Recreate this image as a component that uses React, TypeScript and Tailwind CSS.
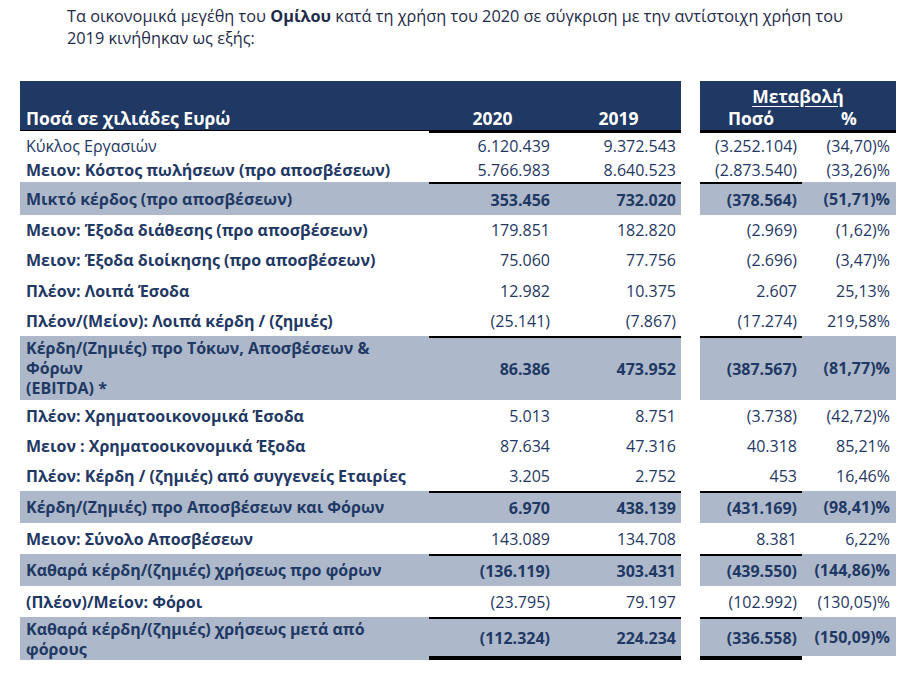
import React from "react";

type Row = {
  label: React.ReactNode;
  v: [string, string, string, string];
  h: number;
  total?: boolean;
  bold?: boolean;
  last?: boolean;
};

const rows: Row[] = [
  { label: "Κύκλος Εργασιών", v: ["6.120.439", "9.372.543", "(3.252.104)", "(34,70)%"], h: 25, bold: false },
  { label: "Μειον: Κόστος πωλήσεων (προ αποσβέσεων)", v: ["5.766.983", "8.640.523", "(2.873.540)", "(33,26)%"], h: 24 },
  { label: "Μικτό κέρδος (προ αποσβέσεων)", v: ["353.456", "732.020", "(378.564)", "(51,71)%"], h: 33, total: true },
  { label: "Μειον: Έξοδα διάθεσης (προ αποσβέσεων)", v: ["179.851", "182.820", "(2.969)", "(1,62)%"], h: 30 },
  { label: "Μειον: Έξοδα διοίκησης (προ αποσβέσεων)", v: ["75.060", "77.756", "(2.696)", "(3,47)%"], h: 30 },
  { label: "Πλέον: Λοιπά Έσοδα", v: ["12.982", "10.375", "2.607", "25,13%"], h: 31 },
  { label: "Πλέον/(Μείον): Λοιπά κέρδη / (ζημιές)", v: ["(25.141)", "(7.867)", "(17.274)", "219,58%"], h: 30 },
  {
    label: (
      <>
        Κέρδη/(Ζημιές) προ Τόκων, Αποσβέσεων &amp;
        <br />
        Φόρων
        <br />
        (EBITDA) *
      </>
    ),
    v: ["86.386", "473.952", "(387.567)", "(81,77)%"],
    h: 64,
    total: true,
  },
  { label: "Πλέον: Χρηματοοικονομικά Έσοδα", v: ["5.013", "8.751", "(3.738)", "(42,72)%"], h: 31 },
  { label: "Μειον : Χρηματοοικονομικά Έξοδα", v: ["87.634", "47.316", "40.318", "85,21%"], h: 30 },
  { label: "Πλέον: Κέρδη / (ζημιές) από συγγενείς Εταιρίες", v: ["3.205", "2.752", "453", "16,46%"], h: 30 },
  { label: "Κέρδη/(Ζημιές) προ Αποσβέσεων και Φόρων", v: ["6.970", "438.139", "(431.169)", "(98,41)%"], h: 32, total: true },
  { label: "Μειον: Σύνολο Αποσβέσεων", v: ["143.089", "134.708", "8.381", "6,22%"], h: 31 },
  { label: "Καθαρά κέρδη/(ζημιές) χρήσεως προ φόρων", v: ["(136.119)", "303.431", "(439.550)", "(144,86)%"], h: 32, total: true },
  { label: "(Πλέον)/Μείον: Φόροι", v: ["(23.795)", "79.197", "(102.992)", "(130,05)%"], h: 31 },
  {
    label: (
      <>
        Καθαρά κέρδη/(ζημιές) χρήσεως μετά από
        <br />
        φόρους
      </>
    ),
    v: ["(112.324)", "224.234", "(336.558)", "(150,09)%"],
    h: 43,
    total: true,
    last: true,
  },
];

function DataRow({ r }: { r: Row }) {
  const bg = r.total ? "bg-[#adb9ca]" : "bg-white";
  const numW = r.total ? "font-bold" : "font-normal";
  const top = r.total ? "border-t-2 border-t-black" : "";
  const bottom = r.last ? "border-b-4 border-b-black" : "";
  const labelW = r.bold === false ? "font-normal" : "font-bold";
  return (
    <>
      <div
        className={`${bg} ${labelW} leading-[20px] flex items-center pl-[6px] whitespace-nowrap`}
        style={{ height: r.h }}
      >
        <div>{r.label}</div>
      </div>
      <div className={`${bg} ${numW} ${top} ${bottom} flex items-center justify-end pr-[6px]`}>{r.v[0]}</div>
      <div className={`${bg} ${numW} ${top} ${bottom} flex items-center justify-end pr-[5px]`}>{r.v[1]}</div>
      <div className="bg-white" />
      <div className={`${bg} ${numW} ${top} ${bottom} flex items-center justify-end pr-[5px]`}>{r.v[2]}</div>
      <div className={`${bg} ${numW} flex items-center justify-end pr-[6px] ${r.last ? "mb-[4px]" : ""}`}>{r.v[3]}</div>
    </>
  );
}

export default function App() {
  return (
    <div className="w-[908px] h-[682px] bg-white font-['Open_Sans',sans-serif] text-[#1f3864] overflow-hidden">
      <p className="pl-[67px] pt-[5px] text-[16.3px] leading-[22px] text-[#1f2b4a] whitespace-nowrap">
        Τα οικονομικά μεγέθη του <span className="font-bold">Ομίλου</span> κατά τη χρήση του 2020 σε σύγκριση με την αντίστοιχη χρήση του
        <br />
        2019 κινήθηκαν ως εξής:
      </p>
      <div className="mt-[32px] ml-[20px] grid grid-cols-[409px_127px_125px_19px_102px_94px] text-[16px] leading-[20px]">
        {/* header */}
        <div className="self-start h-[50px] bg-[#1f3864] border-b border-b-black flex items-end pl-[6px] pb-[1px] text-white font-bold text-[17.5px] leading-[22px]">
          Ποσά σε χιλιάδες Ευρώ
        </div>
        <div className="h-[52px] bg-[#1f3864] border-b-[3px] border-b-black flex items-end justify-center pb-[1px] text-white font-bold text-[17.5px] leading-[22px]">
          2020
        </div>
        <div className="h-[52px] bg-[#1f3864] border-b-[3px] border-b-black flex items-end justify-center pb-[1px] text-white font-bold text-[17.5px] leading-[22px]">
          2019
        </div>
        <div className="bg-white" />
        <div className="col-span-2 h-[52px] bg-[#1f3864] border-b-[3px] border-b-black flex flex-col justify-end pb-[1px] text-white font-bold text-[17.5px] leading-[22px]">
          <div className="text-center">
            <span className="underline underline-offset-[3px]">Μεταβολή</span>
          </div>
          <div className="flex">
            <div className="w-[102px] text-center">Ποσό</div>
            <div className="w-[94px] text-center">%</div>
          </div>
        </div>
        {rows.map((r, i) => (
          <DataRow key={i} r={r} />
        ))}
      </div>
    </div>
  );
}
